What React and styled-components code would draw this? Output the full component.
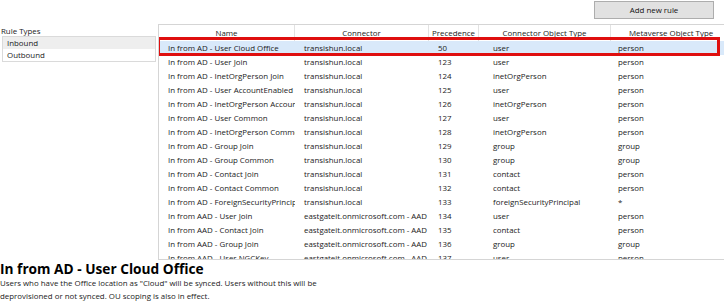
import React from "react";
import styled, { createGlobalStyle } from "styled-components";

const Global = createGlobalStyle`
  html, body { margin: 0; padding: 0; background: #fff; overflow: hidden; }
  body { font-family: "Open Sans", "Noto Sans", sans-serif; color: #1b1b1b; }
`;

const FS = "7.9px";

const Page = styled.div`
  width: 724px;
  height: 303px;
  overflow: hidden;
  display: flex;
  flex-direction: column;
`;

const Top = styled.div`
  display: flex;
  height: 260px;
`;

const LeftPanel = styled.div`
  width: 158px;
  flex: none;
  padding-top: 26px;
  box-sizing: border-box;
`;

const PanelLabel = styled.div`
  font-size: ${FS};
  line-height: 10px;
  padding-left: 1px;
`;

const ListBox = styled.div`
  margin-left: 2px;
  width: 154px;
  border: 1px solid #dadada;
  box-sizing: border-box;
`;

const ListItem = styled.div`
  height: 12px;
  line-height: 12px;
  font-size: ${FS};
  padding-left: 4px;
  background: ${(p) => (p.$selected ? "#eeeeee" : "#fff")};
`;

const RightPanel = styled.div`
  flex: 1;
  min-width: 0;
  display: flex;
  flex-direction: column;
`;

const Toolbar = styled.div`
  height: 24px;
  display: flex;
  justify-content: flex-end;
  align-items: flex-start;
  padding: 1px 10px 0 0;
  box-sizing: border-box;
`;

const Button = styled.button`
  width: 120px;
  height: 18px;
  background: #e1e1e1;
  border: 1px solid #adadad;
  font-family: inherit;
  font-size: ${FS};
  color: #111;
  padding: 0;
`;

const Table = styled.div`
  flex: 1;
  width: 600px;
  border: 1px solid #d5d5d5;
  border-right: none;
  overflow: hidden;
  display: flex;
  flex-direction: column;
`;

const COLS = "136px 134px 50px 132px 140px";

const HeaderRow = styled.div`
  display: grid;
  grid-template-columns: ${COLS};
  height: 16px;
`;

const HeaderCell = styled.div`
  font-size: ${FS};
  line-height: 16px;
  text-align: ${(p) => (p.$align === "left" ? "left" : "center")};
  padding-left: ${(p) => p.$pad || 0}px;
  color: #222;
  border-right: 1px solid #e2e2e2;
  white-space: nowrap;
  overflow: hidden;
`;

const Body = styled.div`
  display: flex;
  flex-direction: column;
`;

const Row = styled.div`
  position: relative;
  display: grid;
  grid-template-columns: ${COLS};
  height: 14px;
  background: ${(p) => (p.$selected ? "#d9e9fa" : "transparent")};
  &::after {
    content: "";
    display: ${(p) => (p.$annotated ? "block" : "none")};
    position: absolute;
    left: -2px;
    top: -4px;
    width: 563px;
    height: 19px;
    border: 3px solid #df0f0f;
    box-sizing: border-box;
    pointer-events: none;
  }
`;

const Cell = styled.div`
  font-size: ${FS};
  line-height: 14px;
  padding-left: ${(p) => p.$pad}px;
  white-space: nowrap;
  overflow: hidden;
  color: #1b1b1b;
`;

const Details = styled.div`
  padding-top: 1px;
`;

const Title = styled.div`
  font-size: 13.7px;
  font-weight: 700;
  line-height: 16px;
  color: #000;
`;

const Description = styled.div`
  font-size: ${FS};
  line-height: 13px;
  width: 340px;
  color: #1b1b1b;
`;

const pads = [9, 9, 9, 14, 7];

const rows = [
  ["In from AD - User Cloud Office", "transishun.local", "50", "user", "person"],
  ["In from AD - User Join", "transishun.local", "123", "user", "person"],
  ["In from AD - InetOrgPerson Join", "transishun.local", "124", "inetOrgPerson", "person"],
  ["In from AD - User AccountEnabled", "transishun.local", "125", "user", "person"],
  ["In from AD - InetOrgPerson AccountEnabled", "transishun.local", "126", "inetOrgPerson", "person"],
  ["In from AD - User Common", "transishun.local", "127", "user", "person"],
  ["In from AD - InetOrgPerson Common", "transishun.local", "128", "inetOrgPerson", "person"],
  ["In from AD - Group Join", "transishun.local", "129", "group", "group"],
  ["In from AD - Group Common", "transishun.local", "130", "group", "group"],
  ["In from AD - Contact Join", "transishun.local", "131", "contact", "person"],
  ["In from AD - Contact Common", "transishun.local", "132", "contact", "person"],
  ["In from AD - ForeignSecurityPrincipal", "transishun.local", "133", "foreignSecurityPrincipal", "*"],
  ["In from AAD - User Join", "eastgateit.onmicrosoft.com - AAD", "134", "user", "person"],
  ["In from AAD - Contact Join", "eastgateit.onmicrosoft.com - AAD", "135", "contact", "person"],
  ["In from AAD - Group Join", "eastgateit.onmicrosoft.com - AAD", "136", "group", "group"],
  ["In from AAD - User NGCKey", "eastgateit.onmicrosoft.com - AAD", "137", "user", "person"],
];

const headers = ["Name", "Connector", "Precedence", "Connector Object Type", "Metaverse Object Type"];

export default function App() {
  return (
    <>
      <Global />
      <Page>
        <Top>
          <LeftPanel>
            <PanelLabel>Rule Types</PanelLabel>
            <ListBox>
              <ListItem $selected>Inbound</ListItem>
              <ListItem>Outbound</ListItem>
            </ListBox>
          </LeftPanel>
          <RightPanel>
            <Toolbar>
              <Button>Add new rule</Button>
            </Toolbar>
            <Table>
              <HeaderRow>
                {headers.map((h, i) => (
                  <HeaderCell key={h} $align={i === 4 ? "left" : "center"} $pad={i === 4 ? 18 : 0}>
                    {h}
                  </HeaderCell>
                ))}
              </HeaderRow>
              <Body>
                {rows.map((r, ri) => (
                  <Row key={ri} $selected={ri === 0} $annotated={ri === 0}>
                    {r.map((c, ci) => (
                      <Cell key={ci} $pad={pads[ci]}>
                        {c}
                      </Cell>
                    ))}
                  </Row>
                ))}
              </Body>
            </Table>
          </RightPanel>
        </Top>
        <Details>
          <Title>In from AD - User Cloud Office</Title>
          <Description>
            Users who have the Office location as "Cloud" will be synced. Users without this will be
            deprovisioned or not synced. OU scoping is also in effect.
          </Description>
        </Details>
      </Page>
    </>
  );
}
